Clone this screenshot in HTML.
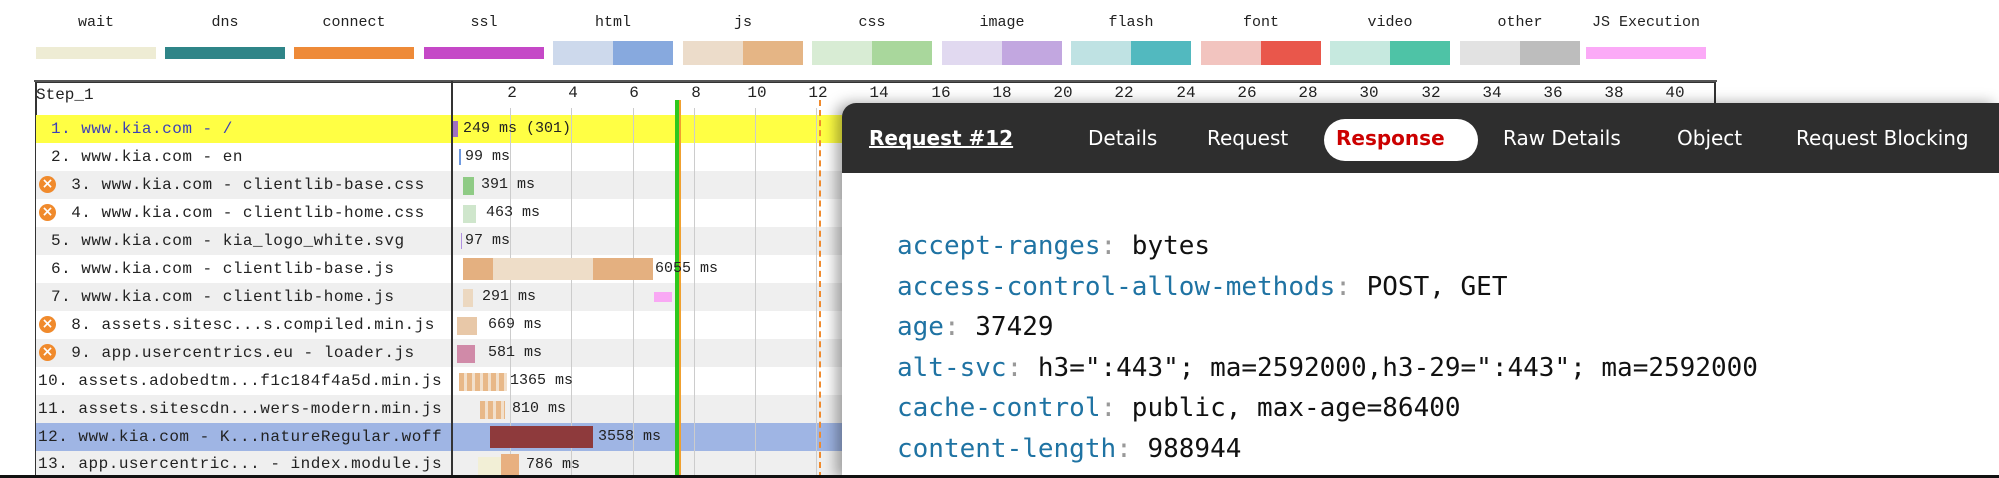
<!DOCTYPE html>
<html><head><meta charset="utf-8"><style>
*{margin:0;padding:0;box-sizing:border-box}
html,body{width:1999px;height:478px;overflow:hidden;background:#fff}
#w{position:relative;width:1999px;height:478px;overflow:hidden;font-family:"Liberation Mono",monospace}
.a{position:absolute}
.lab{position:absolute;top:14px;font-size:15px;color:#222;width:120px;text-align:center}
.bar{position:absolute;height:12px;top:47px}
.gb{position:absolute;top:41px;height:24px;width:120px;display:flex}
.gb div{flex:1}
.row{position:absolute;left:36px;width:1680px;height:28px}
.rt{position:absolute;font-size:16px;letter-spacing:0.5px;color:#222;line-height:28px;white-space:pre}
.tk{position:absolute;top:84px;font-size:16px;color:#222;width:30px;text-align:center;margin-left:-15px}
.vl{position:absolute;top:108px;width:1px;height:370px;background:#ccc}
.ic{position:absolute;left:39px;width:17px;height:17px;border-radius:50%;background:#f08a2c;color:#fff;font:bold 14px/17px "DejaVu Sans",sans-serif;text-align:center}
.ms{position:absolute;font-size:15px;color:#222;line-height:28px;white-space:pre}
.nav{position:absolute;top:126px;font:20px "DejaVu Sans",sans-serif;color:#fff}
.hl{position:absolute;left:897px;font:26px "DejaVu Sans Mono",monospace;color:#111;white-space:pre;line-height:40px}
.hl b{font-weight:normal;color:#1f73a3}
.hl i{font-style:normal;color:#999}
</style></head><body><div id="w">
<div class="lab" style="left:36px">wait</div>
<div class="lab" style="left:165px">dns</div>
<div class="lab" style="left:294px">connect</div>
<div class="lab" style="left:424px">ssl</div>
<div class="lab" style="left:553px">html</div>
<div class="lab" style="left:683px">js</div>
<div class="lab" style="left:812px">css</div>
<div class="lab" style="left:942px">image</div>
<div class="lab" style="left:1071px">flash</div>
<div class="lab" style="left:1201px">font</div>
<div class="lab" style="left:1330px">video</div>
<div class="lab" style="left:1460px">other</div>
<div class="lab" style="left:1586px">JS Execution</div>
<div class="bar" style="left:36px;width:120px;background:#eeecd4"></div>
<div class="bar" style="left:165px;width:120px;background:#2f8588"></div>
<div class="bar" style="left:294px;width:120px;background:#ee8a38"></div>
<div class="bar" style="left:424px;width:120px;background:#c548c7"></div>
<div class="gb" style="left:553px"><div style="background:#cdd9ec"></div><div style="background:#87a9de"></div></div>
<div class="gb" style="left:683px"><div style="background:#ecdcca"></div><div style="background:#e5b585"></div></div>
<div class="gb" style="left:812px"><div style="background:#d8ecd4"></div><div style="background:#a9d79c"></div></div>
<div class="gb" style="left:942px"><div style="background:#e1d9f0"></div><div style="background:#c2a7e0"></div></div>
<div class="gb" style="left:1071px"><div style="background:#bfe2e3"></div><div style="background:#52b9bf"></div></div>
<div class="gb" style="left:1201px"><div style="background:#f2c4bf"></div><div style="background:#e9574b"></div></div>
<div class="gb" style="left:1330px"><div style="background:#c6e9df"></div><div style="background:#4ec3a6"></div></div>
<div class="gb" style="left:1460px"><div style="background:#e2e2e2"></div><div style="background:#bdbdbd"></div></div>
<div class="bar" style="left:1586px;width:120px;background:#fbaaf7"></div>

<div class="a" style="left:35px;top:81px;width:1681px;height:397px;border:2px solid #333;border-bottom:none"></div>
<div class="a" style="left:34px;top:80px;width:1683px;height:2px;background:#555"></div>
<div class="a" style="left:36px;top:86px;font-size:16px;color:#222">Step_1</div>

<div class="row" style="top:115px;background:#ffff44"></div>
<div class="row" style="top:143px;background:#fff"></div>
<div class="row" style="top:171px;background:#efefef"></div>
<div class="row" style="top:199px;background:#fff"></div>
<div class="row" style="top:227px;background:#efefef"></div>
<div class="row" style="top:255px;background:#fff"></div>
<div class="row" style="top:283px;background:#efefef"></div>
<div class="row" style="top:311px;background:#fff"></div>
<div class="row" style="top:339px;background:#efefef"></div>
<div class="row" style="top:367px;background:#fff"></div>
<div class="row" style="top:395px;background:#efefef"></div>
<div class="row" style="top:423px;background:#9fb5e4"></div>
<div class="row" style="top:451px;height:27px;background:#efefef"></div>

<div class="vl" style="left:510px"></div><div class="vl" style="left:571px"></div><div class="vl" style="left:633px"></div><div class="vl" style="left:694px"></div><div class="vl" style="left:755px"></div><div class="vl" style="left:816px"></div>
<div class="a" style="left:451px;top:81px;width:2px;height:397px;background:#333"></div>

<div class="tk" style="left:512px">2</div><div class="tk" style="left:573px">4</div><div class="tk" style="left:634px">6</div><div class="tk" style="left:696px">8</div><div class="tk" style="left:757px">10</div><div class="tk" style="left:818px">12</div><div class="tk" style="left:879px">14</div><div class="tk" style="left:941px">16</div><div class="tk" style="left:1002px">18</div><div class="tk" style="left:1063px">20</div><div class="tk" style="left:1124px">22</div><div class="tk" style="left:1186px">24</div><div class="tk" style="left:1247px">26</div><div class="tk" style="left:1308px">28</div><div class="tk" style="left:1369px">30</div><div class="tk" style="left:1431px">32</div><div class="tk" style="left:1492px">34</div><div class="tk" style="left:1553px">36</div><div class="tk" style="left:1614px">38</div><div class="tk" style="left:1675px">40</div>

<div class="a" style="left:675px;top:100px;width:4px;height:378px;background:#2ec81c"></div>
<div class="a" style="left:679px;top:100px;width:2px;height:378px;background:#f0a030"></div>
<div class="a" style="left:819px;top:100px;height:378px;border-left:2px dashed #f08a2c"></div>

<div class="rt" style="left:51px;top:115px;color:#3b3fb8">1. www.kia.com - /</div>
<div class="rt" style="left:51px;top:143px">2. www.kia.com - en</div>
<div class="ic" style="top:176px">×</div><div class="rt" style="left:51px;top:171px">  3. www.kia.com - clientlib-base.css</div>
<div class="ic" style="top:204px">×</div><div class="rt" style="left:51px;top:199px">  4. www.kia.com - clientlib-home.css</div>
<div class="rt" style="left:51px;top:227px">5. www.kia.com - kia_logo_white.svg</div>
<div class="rt" style="left:51px;top:255px">6. www.kia.com - clientlib-base.js</div>
<div class="rt" style="left:51px;top:283px">7. www.kia.com - clientlib-home.js</div>
<div class="ic" style="top:316px">×</div><div class="rt" style="left:51px;top:311px">  8. assets.sitesc...s.compiled.min.js</div>
<div class="ic" style="top:344px">×</div><div class="rt" style="left:51px;top:339px">  9. app.usercentrics.eu - loader.js</div>
<div class="rt" style="left:38px;top:367px">10. assets.adobedtm...f1c184f4a5d.min.js</div>
<div class="rt" style="left:38px;top:395px">11. assets.sitescdn...wers-modern.min.js</div>
<div class="rt" style="left:38px;top:423px">12. www.kia.com - K...natureRegular.woff</div>
<div class="rt" style="left:38px;top:451px;line-height:27px;height:27px">13. app.usercentric... - index.module.js</div>

<div class="a" style="left:453px;top:121px;width:5px;height:16px;background:#a070c0"></div><div class="ms" style="left:463px;top:115px">249 ms (301)</div>
<div class="a" style="left:459px;top:149px;width:2px;height:16px;background:#6f9ae0"></div><div class="ms" style="left:465px;top:143px">99 ms</div>
<div class="a" style="left:463px;top:177px;width:11px;height:18px;background:#8fcb85"></div><div class="ms" style="left:481px;top:171px">391 ms</div>
<div class="a" style="left:463px;top:205px;width:13px;height:18px;background:#cfe6cc"></div><div class="ms" style="left:486px;top:199px">463 ms</div>
<div class="a" style="left:461px;top:233px;width:1px;height:16px;background:#b090e0"></div><div class="ms" style="left:465px;top:227px">97 ms</div>
<div class="a" style="left:463px;top:258px;width:190px;height:22px;background:#e4b080"></div><div class="a" style="left:493px;top:258px;width:100px;height:22px;background:#eeddc8"></div><div class="ms" style="left:655px;top:255px">6055 ms</div>
<div class="a" style="left:463px;top:289px;width:10px;height:18px;background:#ecd8c0"></div><div class="ms" style="left:482px;top:283px">291 ms</div><div class="a" style="left:654px;top:292px;width:18px;height:10px;background:#f9a8f4"></div>
<div class="a" style="left:457px;top:317px;width:20px;height:18px;background:#e8c8a8"></div><div class="ms" style="left:488px;top:311px">669 ms</div>
<div class="a" style="left:457px;top:345px;width:18px;height:18px;background:#d08aa8"></div><div class="ms" style="left:488px;top:339px">581 ms</div>
<div class="a" style="left:459px;top:373px;width:48px;height:18px;background:repeating-linear-gradient(90deg,#e8b888 0 5px,#f2e0cc 5px 8px)"></div><div class="ms" style="left:510px;top:367px">1365 ms</div>
<div class="a" style="left:480px;top:401px;width:25px;height:18px;background:repeating-linear-gradient(90deg,#e8b888 0 5px,#f2e0cc 5px 8px)"></div><div class="ms" style="left:512px;top:395px">810 ms</div>
<div class="a" style="left:490px;top:426px;width:103px;height:22px;background:#8e3a3c"></div><div class="ms" style="left:598px;top:423px">3558 ms</div>
<div class="a" style="left:478px;top:457px;width:40px;height:18px;background:#f2efd6"></div><div class="a" style="left:501px;top:454px;width:18px;height:22px;background:#e8b080"></div><div class="ms" style="left:526px;top:451px;line-height:27px">786 ms</div>

<div class="a" style="left:842px;top:103px;width:1157px;height:375px;background:#fff;border-top-left-radius:14px;box-shadow:-6px 0 14px rgba(0,0,0,.35);overflow:hidden">
 <div class="a" style="left:0;top:0;width:1157px;height:70px;background:#2e2e2e"></div>
 <div class="hl" style="left:55px;top:366px"><b>content-type</b><i>:</i> application/font-woff</div>
</div>
<div class="nav" style="left:869px;font-weight:bold;text-decoration:underline">Request #12</div>
<div class="nav" style="left:1088px">Details</div>
<div class="nav" style="left:1207px">Request</div>
<div class="a" style="left:1324px;top:119px;width:154px;height:42px;border-radius:21px;background:#fff"></div>
<div class="nav" style="left:1336px;color:#c00;font-weight:bold">Response</div>
<div class="nav" style="left:1503px">Raw Details</div>
<div class="nav" style="left:1677px">Object</div>
<div class="nav" style="left:1796px">Request Blocking</div>

<div class="hl" style="top:226px"><b>accept-ranges</b><i>:</i> bytes</div>
<div class="hl" style="top:267px"><b>access-control-allow-methods</b><i>:</i> POST, GET</div>
<div class="hl" style="top:307px"><b>age</b><i>:</i> 37429</div>
<div class="hl" style="top:348px"><b>alt-svc</b><i>:</i> h3=":443"; ma=2592000,h3-29=":443"; ma=2592000</div>
<div class="hl" style="top:388px"><b>cache-control</b><i>:</i> public, max-age=86400</div>
<div class="hl" style="top:429px;height:40px"><b>content-length</b><i>:</i> 988944</div>

<div class="a" style="left:0;top:475px;width:1999px;height:3px;background:#111"></div>
</div></body></html>
